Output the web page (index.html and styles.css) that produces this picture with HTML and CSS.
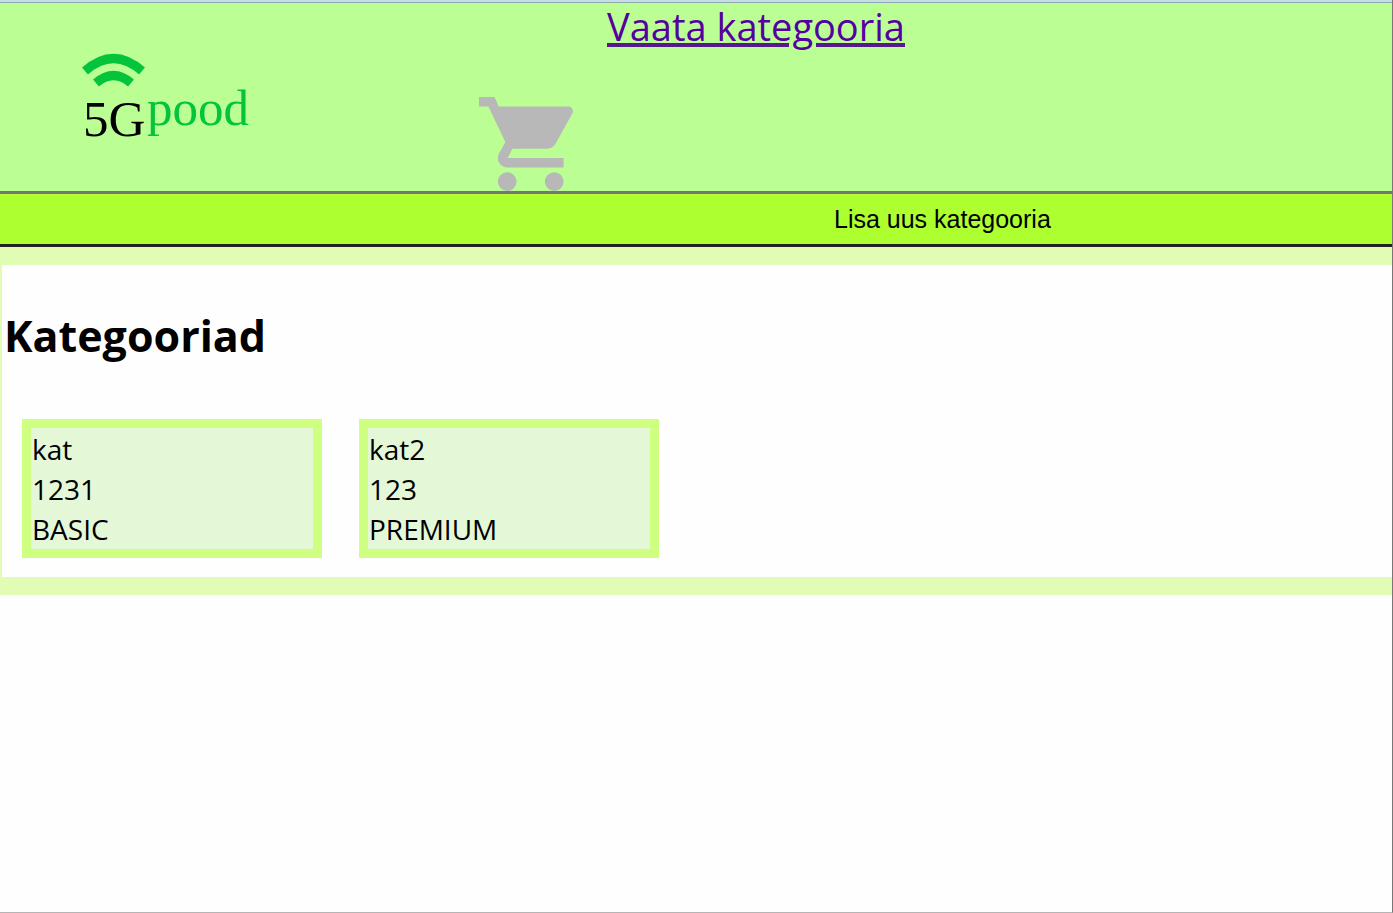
FILE: index.html
```html
<!DOCTYPE html>
<html lang="et">
<head>
<meta charset="utf-8">
<title>5G pood</title>
<link rel="stylesheet" href="styles.css">
</head>
<body>
<header class="header">
  <svg class="logo" viewBox="0 0 170 84" role="img" aria-label="5G pood">
    <path class="logo-wave" d="M3 17Q31.500 -8 60 17"/>
    <path class="logo-wave" d="M14 29Q31.500 14 49 29"/>
    <text class="logo-5g" x="1" y="82">5G</text>
    <text class="logo-pood" x="65" y="71">pood</text>
  </svg>
  <svg class="cart" viewBox="1 2 20 20" role="img" aria-label="Ostukorv">
    <path d="M7 18a2 2 0 1 0 0 4 2 2 0 0 0 0-4zM1 2v2h2l3.600 7.590-1.350 2.450c-.16.28-.25.61-.25.96 0 1.100.9 2 2 2h12v-2H7.100L8.100 13h7.450c.75 0 1.410-.41 1.750-1.030l3.580-6.490c.08-.14.12-.31.12-.48 0-.55-.45-1-1-1H5.210l-.94-2H1zm16 16a2 2 0 1 0 0 4 2 2 0 0 0 0-4z"/>
  </svg>
  <a class="view-link" href="#kategooriad">Vaata kategooria</a>
</header>
<nav class="nav">
  <button class="nav-button" type="button">Lisa uus kategooria</button>
</nav>
<main class="content" id="kategooriad">
  <h1 class="title">Kategooriad</h1>
  <div class="cards">
    <article class="card"><div>kat</div><div>1231</div><div>BASIC</div></article>
    <article class="card"><div>kat2</div><div>123</div><div>PREMIUM</div></article>
  </div>
</main>
</body>
</html>
```
FILE: styles.css
```css
* {
  box-sizing: border-box;
}

body {
  margin: 0;
  min-height: 100vh;
  border-right: 1px solid #777;
  border-bottom: 1px solid #b5b5b5;
  background: #fefefe;
  color: #000;
  font-family: "Segoe UI", "Open Sans", sans-serif;
}

.header {
  display: flex;
  align-items: flex-end;
  height: 194px;
  padding-left: 82px;
  border-bottom: 3px solid #757575;
  background: linear-gradient(#c4dce4 2px, #8fa9ac 2px, #8fa9ac 3px, #bbff94 3px);
}

.logo {
  width: 170px;
  height: 84px;
  margin-bottom: 53px;
  overflow: visible;
}

.logo-wave {
  fill: none;
  stroke: #04c43c;
  stroke-width: 9;
}

.logo-5g,
.logo-pood {
  font-family: "Liberation Serif", serif;
  font-size: 51px;
}

.logo-pood {
  fill: #04c43c;
}

.cart {
  width: 94px;
  height: 94px;
  margin-left: 227px;
  fill: #b8b8b8;
}

.view-link {
  align-self: flex-start;
  margin-left: 34px;
  color: #5500a0;
  font-size: 38px;
  line-height: 52px;
  text-decoration-color: #551a8b;
  text-decoration-thickness: 4px;
}

.nav {
  height: 53px;
  padding-left: 834px;
  border-bottom: 3px solid #222;
  background: #adff2f;
}

.nav-button {
  height: 50px;
  padding: 0;
  border: 0;
  background: none;
  color: #000;
  font-family: "Liberation Sans", Arial, sans-serif;
  font-size: 25px;
}

.content {
  padding: 36px 0 19px 2px;
  border: solid #e1fcb4;
  border-width: 18px 0 18px 2px;
}

.title {
  margin: 0 0 48px;
  font-size: 43px;
  line-height: 70px;
}

.cards {
  display: flex;
  flex-wrap: wrap;
  gap: 37px;
  padding-left: 18px;
}

.card {
  width: 300px;
  padding: 1px 1px 0;
  border: 9px solid #cfff80;
  background: #e4f8d8;
  font-size: 28px;
  line-height: 40px;
}
```
